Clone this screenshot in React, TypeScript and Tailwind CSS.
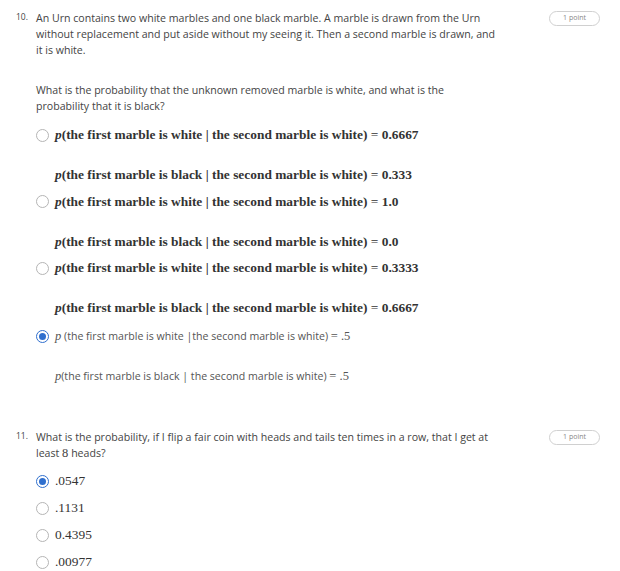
import React from "react"

const sans = { fontFamily: '"Open Sans", "Liberation Sans", sans-serif' }
const serif = { fontFamily: '"Liberation Serif", "DejaVu Serif", serif' }

function Radio({ checked = false }: { checked?: boolean }) {
  return checked ? (
    <span className="flex h-[13px] w-[13px] shrink-0 items-center justify-center rounded-full border-[1.5px] border-[#2f6fce] bg-white">
      <span className="h-[7px] w-[7px] rounded-full bg-[#2f6fce]" />
    </span>
  ) : (
    <span className="h-[13px] w-[13px] shrink-0 rounded-full border border-[#b5b5b5] bg-white" />
  )
}

function Points() {
  return (
    <span
      className="flex h-[15px] w-[51px] shrink-0 items-center justify-center rounded-full border border-[#d0d0d0] text-[7px] text-[#888]"
      style={sans}
    >
      1 point
    </span>
  )
}

function MathLine({ a, b, v }: { a: string; b: string; v: string }) {
  return (
    <span className="text-[13.4px] font-bold leading-[16px] text-[#333]" style={serif}>
      <i>p</i>(the first marble is {a} | the second marble is {b}) <span className="font-normal">=</span> {v}
    </span>
  )
}

const q10 = [
  { w: "0.6667", b: "0.333" },
  { w: "1.0", b: "0.0" },
  { w: "0.3333", b: "0.6667" },
]

export default function App() {
  return (
    <div className="min-h-[571px] w-[620px] bg-white text-[#444]" style={sans}>
      {/* Question 10 */}
      <div className="flex gap-[5px] pl-[16px] pr-[20px] pt-[10px]">
        <span className="w-[15px] pt-[1px] text-[8.5px]">10.</span>
        <div className="flex-1">
          <div className="flex items-start justify-between">
            <p className="w-[462px] text-[10.6px] leading-[16px]">
              An Urn contains two white marbles and one black marble. A marble is drawn from the Urn without
              replacement and put aside without my seeing it. Then a second marble is drawn, and it is white.
            </p>
            <div className="pt-[1px]">
              <Points />
            </div>
          </div>
          <p className="mt-[24px] w-[430px] text-[10.6px] leading-[16px]">
            What is the probability that the unknown removed marble is white, and what is the probability
            that it is black?
          </p>

          <div className="mt-[13px] flex flex-col">
            {q10.map((o, i) => (
              <div key={i} className="flex flex-col">
                <div className="flex h-[16px] items-center gap-[6px]">
                  <Radio />
                  <MathLine a="white" b="white" v={o.w} />
                </div>
                <div className="mb-[10.5px] mt-[24px] flex h-[16px] items-center pl-[19px]">
                  <MathLine a="black" b="white" v={o.b} />
                </div>
              </div>
            ))}
            <div className="mt-[1.5px] flex h-[16px] items-center gap-[6px]">
              <Radio checked />
              <span className="text-[10.6px] leading-[16px] text-[#555]">
                <i style={serif} className="text-[12.5px]">p</i> (the first marble is white |the second marble is
                white) <span style={serif} className="text-[12.5px]">= .5</span>
              </span>
            </div>
            <div className="mt-[24px] flex h-[16px] items-center pl-[19px]">
              <span className="text-[10.6px] leading-[16px] text-[#555]">
                <i style={serif} className="text-[12.5px]">p</i>(the first marble is black | the second marble is
                white) <span style={serif} className="text-[12.5px]">= .5</span>
              </span>
            </div>
          </div>
        </div>
      </div>

      {/* Question 11 */}
      <div className="mt-[45px] flex gap-[5px] pl-[16px] pr-[20px]">
        <span className="w-[15px] pt-[1px] text-[8.5px]">11.</span>
        <div className="flex-1">
          <div className="flex items-start justify-between">
            <p className="w-[462px] text-[10.6px] leading-[16px]">
              What is the probability, if I flip a fair coin with heads and tails ten times in a row, that I get at
              least{" "}
              <span style={serif} className="inline-block text-[12.5px] leading-[12px]">
                8
              </span>{" "}
              heads?
            </p>
            <div className="pt-[1px]">
              <Points />
            </div>
          </div>
          <div className="mt-[12px] flex flex-col gap-[11px]">
            {[".0547", ".1131", "0.4395", ".00977"].map((v, i) => (
              <div key={v} className="flex h-[16px] items-center gap-[6px]">
                <Radio checked={i === 0} />
                <span className="text-[13.4px] leading-[16px] text-[#333]" style={serif}>
                  {v}
                </span>
              </div>
            ))}
          </div>
        </div>
      </div>
    </div>
  )
}
